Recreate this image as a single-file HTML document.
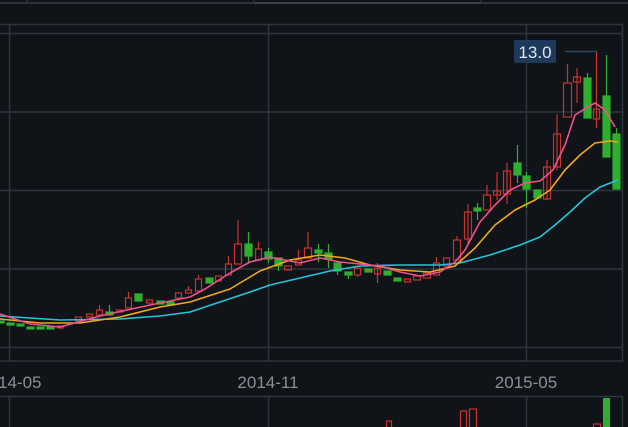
<!DOCTYPE html>
<html><head><meta charset="utf-8"><style>
html,body{margin:0;padding:0;background:#101419;overflow:hidden}
svg{display:block}
text{font-family:"Liberation Sans",sans-serif}
</style></head><body>
<svg width="628" height="427" viewBox="0 0 628 427" xmlns="http://www.w3.org/2000/svg">
<rect width="628" height="427" fill="#101419"/>
<line x1="0" y1="3" x2="628" y2="3" stroke="#2b323b" stroke-width="2"/>
<line x1="254" y1="3" x2="481" y2="3" stroke="#3a424c" stroke-width="2"/>
<line x1="27" y1="0" x2="27" y2="3" stroke="#2b323b" stroke-width="1.5"/>
<line x1="254" y1="0" x2="254" y2="3" stroke="#2b323b" stroke-width="1.5"/>
<line x1="481" y1="0" x2="481" y2="3" stroke="#2b323b" stroke-width="1.5"/>
<g stroke="#2c343d" stroke-width="1.5" fill="none">
<path d="M0 24.5 H622.5 V361 H0"/>
<line x1="0" y1="33.5" x2="622" y2="33.5"/>
<line x1="0" y1="112" x2="622" y2="112"/>
<line x1="0" y1="190.5" x2="622" y2="190.5"/>
<line x1="0" y1="269" x2="622" y2="269"/>
<line x1="0" y1="347.5" x2="622" y2="347.5"/>
<line x1="9.5" y1="24" x2="9.5" y2="361"/>
<line x1="268.5" y1="24" x2="268.5" y2="361"/>
<line x1="526.5" y1="24" x2="526.5" y2="361"/>
<path d="M0 396.5 H622.5 V427"/>
<line x1="9.5" y1="396" x2="9.5" y2="427"/>
<line x1="268.5" y1="396" x2="268.5" y2="427"/>
<line x1="526.5" y1="396" x2="526.5" y2="427"/>
</g>
<g fill="#8a8f96" font-size="17">
<text x="-2" y="388">14-05</text>
<text x="268" y="388" text-anchor="middle">2014-11</text>
<text x="526" y="388" text-anchor="middle">2015-05</text>
</g>
<g stroke-width="1.2">
<g fill="#2fae2f" stroke="#2fae2f">
<rect x="0" y="321" width="4" height="2"/><rect x="7" y="323" width="7" height="2"/><rect x="17" y="324" width="7" height="2"/><rect x="27" y="327" width="7" height="2"/><rect x="37" y="327" width="7" height="2"/><rect x="47" y="327" width="7" height="2"/>
<rect x="106" y="312" width="7" height="3"/><line x1="109.5" y1="305" x2="109.5" y2="312"/>
<rect x="135" y="294" width="7" height="7"/><rect x="157" y="301" width="7" height="3"/><rect x="167" y="302" width="7" height="3"/>
<rect x="206" y="278" width="7" height="5"/><rect x="245" y="244" width="7" height="12"/><line x1="248.5" y1="232" x2="248.5" y2="263"/>
<rect x="265" y="252" width="7" height="7"/><line x1="268.5" y1="248" x2="268.5" y2="263"/>
<rect x="275" y="258" width="7" height="8"/><line x1="278.5" y1="266" x2="278.5" y2="271"/>
<rect x="315" y="250" width="7" height="3"/><line x1="318.5" y1="244" x2="318.5" y2="262"/>
<rect x="325" y="253" width="7" height="6"/><line x1="328.5" y1="244" x2="328.5" y2="268"/>
<rect x="334" y="263" width="7" height="8"/><line x1="337.5" y1="271" x2="337.5" y2="275"/>
<rect x="345" y="272" width="7" height="3"/><line x1="348.5" y1="275" x2="348.5" y2="279"/>
<rect x="365" y="269" width="7" height="3"/><rect x="384" y="271" width="7" height="4"/><rect x="394" y="278" width="7" height="3"/>
<rect x="474" y="208" width="7" height="3"/><line x1="477.5" y1="203" x2="477.5" y2="220"/>
<rect x="514" y="163" width="7" height="12"/><line x1="517.5" y1="145" x2="517.5" y2="183"/>
<rect x="523" y="176" width="7" height="13"/><line x1="526.5" y1="172" x2="526.5" y2="208"/>
<rect x="534" y="190" width="7" height="8"/>
<rect x="584" y="78" width="7" height="40"/><line x1="587.5" y1="73" x2="587.5" y2="78"/>
<rect x="603" y="96" width="7" height="61"/><line x1="606.5" y1="55" x2="606.5" y2="96"/>
<rect x="613" y="134" width="7" height="55"/><line x1="616.5" y1="128" x2="616.5" y2="134"/>
</g>
<g fill="none" stroke="#c9332e">
<rect x="57.5" y="326" width="6" height="2"/><rect x="75.5" y="317" width="6" height="4"/><rect x="86.5" y="314" width="6" height="3"/>
<rect x="96.5" y="310" width="6" height="5"/><line x1="99.5" y1="305" x2="99.5" y2="310"/>
<rect x="116.5" y="310" width="6" height="2"/>
<rect x="125.5" y="298" width="6" height="10"/><line x1="128.5" y1="292" x2="128.5" y2="298"/>
<rect x="146.5" y="300" width="6" height="3"/><rect x="175.5" y="293" width="6" height="5"/>
<rect x="185.5" y="290" width="6" height="3"/><line x1="188.5" y1="286" x2="188.5" y2="290"/>
<rect x="195.5" y="279" width="6" height="12"/><line x1="198.5" y1="275" x2="198.5" y2="279"/>
<rect x="215.5" y="276" width="6" height="5"/>
<rect x="225.5" y="264" width="6" height="11"/><line x1="228.5" y1="256" x2="228.5" y2="264"/>
<rect x="234.5" y="244" width="7" height="20"/><line x1="238" y1="220" x2="238" y2="244"/>
<rect x="255.5" y="249" width="6" height="11"/><line x1="258.5" y1="242" x2="258.5" y2="249"/>
<rect x="284.5" y="266" width="7" height="4"/>
<rect x="295.5" y="260" width="6" height="5"/><line x1="298.5" y1="250" x2="298.5" y2="260"/>
<rect x="304.5" y="248" width="7" height="10"/><line x1="308" y1="232" x2="308" y2="248"/>
<rect x="354.5" y="268" width="6" height="7"/><line x1="357.5" y1="275" x2="357.5" y2="277"/>
<rect x="374.5" y="268" width="6" height="6"/><line x1="377.5" y1="263" x2="377.5" y2="283"/>
<rect x="404.5" y="279" width="6" height="3"/><rect x="413.5" y="276" width="7" height="4"/><rect x="423.5" y="273" width="7" height="5"/>
<rect x="433.5" y="263" width="6" height="12"/><line x1="436.5" y1="257" x2="436.5" y2="263"/>
<rect x="443.5" y="258" width="6" height="8"/>
<rect x="453.5" y="240" width="7" height="20"/><line x1="457" y1="236" x2="457" y2="240"/>
<rect x="464.5" y="212" width="7" height="27"/><line x1="468" y1="204" x2="468" y2="245"/>
<rect x="483.5" y="195" width="7" height="15"/><line x1="487" y1="185" x2="487" y2="195"/>
<rect x="493.5" y="191" width="7" height="4"/><line x1="497" y1="172" x2="497" y2="200"/>
<rect x="503.5" y="171" width="7" height="23"/><line x1="507" y1="163" x2="507" y2="204"/>
<rect x="543.5" y="167" width="7" height="32"/><line x1="547" y1="160" x2="547" y2="200"/>
<rect x="553.5" y="134" width="7" height="33"/><line x1="557" y1="114" x2="557" y2="170"/>
<rect x="563.5" y="83" width="8" height="34"/><line x1="567.5" y1="64" x2="567.5" y2="83"/>
<rect x="573.5" y="77" width="7" height="5"/><line x1="577" y1="68" x2="577" y2="103"/>
<rect x="593.5" y="109" width="6" height="10"/><line x1="596.5" y1="51" x2="596.5" y2="128"/>
</g>
</g>
<g fill="none" stroke-width="1.6" stroke-linejoin="round">
<polyline stroke="#22c6d8" points="0,316 60,320 120,319 160,316 190,312 220,302 250,292 270,285 300,278 330,271 360,266 400,265 440,265 460,263 490,255 520,245 540,237 555,225 570,212 585,198 600,187 618,180"/>
<polyline stroke="#f0a81c" points="0,319 40,323 80,323 120,317 160,307 190,302 230,289 260,271 290,260 320,255 345,258 370,265 400,270 430,272 455,266 475,248 495,225 515,210 535,200 550,190 565,170 580,155 595,143 610,141 618,142"/>
<polyline stroke="#f0508e" points="0,314 30,324 60,327 100,316 150,305 190,297 205,289 230,273 250,262 270,257 285,260 300,263 320,258 340,262 360,264 380,266 400,272 420,276 440,272 455,262 465,250 480,222 495,205 510,190 525,183 540,181 553,170 565,145 575,115 586,108 595,103 605,110 615,127"/>
</g>
<rect x="514" y="40" width="42" height="23" rx="2" fill="#1d3a5c"/>
<text x="535" y="58" text-anchor="middle" fill="#dfe6ee" font-size="17">13.0</text>
<line x1="565" y1="51.5" x2="597" y2="51.5" stroke="#2a4464" stroke-width="1.5"/>
<g fill="none" stroke="#c9332e" stroke-width="1.2">
<rect x="386.5" y="421" width="5" height="10"/>
<rect x="460.5" y="411" width="6" height="20"/>
<rect x="469.5" y="409" width="7" height="22"/>
<rect x="593.5" y="424" width="7" height="7"/>
</g>
<rect x="603" y="398" width="7" height="30" fill="#2fae2f"/>
</svg>
</body></html>
